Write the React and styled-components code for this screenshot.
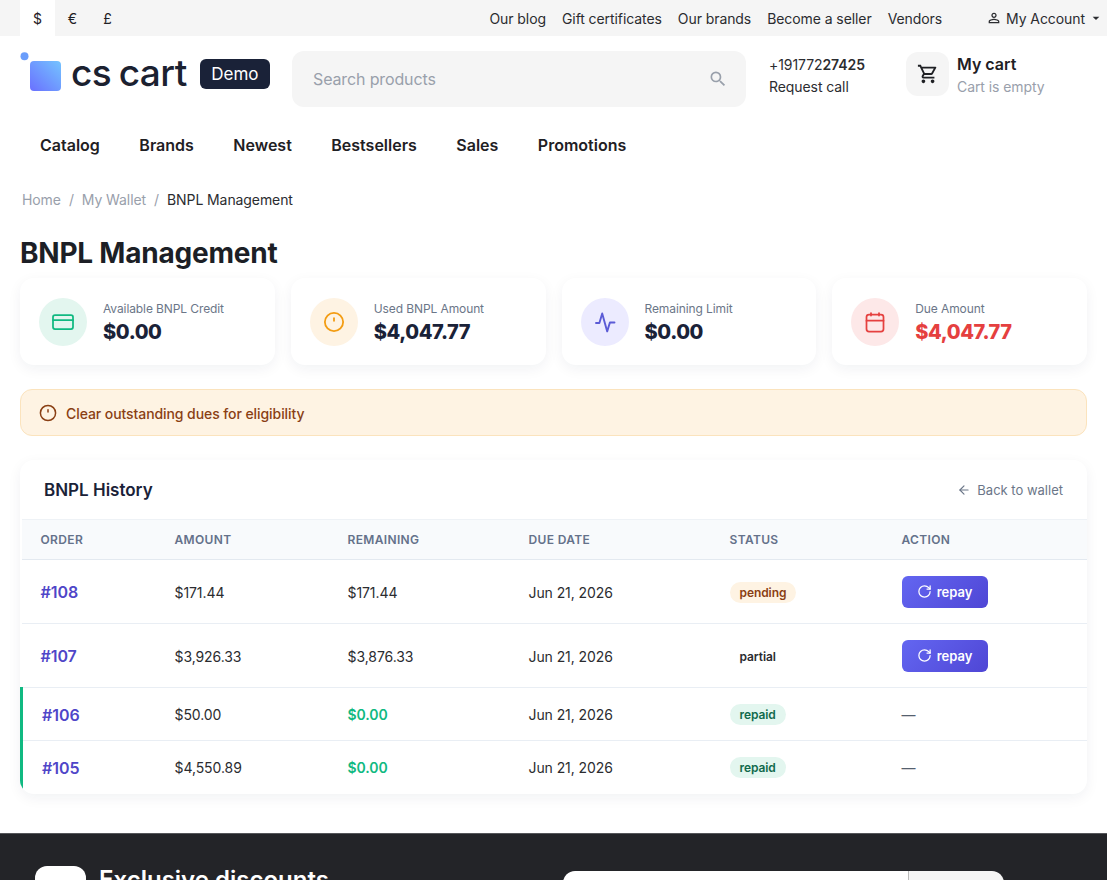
import React from "react";
import styled, { createGlobalStyle } from "styled-components";
import { CreditCard, ArrowLeft, RotateCw } from "lucide-react";
import {
  MdOutlinePersonOutline,
  MdOutlineShoppingCart,
  MdSearch,
  MdArrowDropDown,
} from "react-icons/md";

const GlobalStyle = createGlobalStyle`
  html, body {
    margin: 0;
    height: 880px;
    overflow: hidden;
    background: #fff;
  }
  body {
    font-family: Inter, "Liberation Sans", sans-serif;
    color: #1f2024;
  }
  * { box-sizing: border-box; }
`;

const Page = styled.div`
  width: 1107px;
`;

const TopBar = styled.div`
  height: 36px;
  background: #f5f5f5;
  display: flex;
  align-items: center;
  justify-content: space-between;
  padding: 0 4px 0 20px;
  font-size: 14px;
  letter-spacing: -0.08px;
`;

const Currencies = styled.div`
  display: flex;
  height: 100%;
`;

const Currency = styled.span`
  width: 35px;
  display: flex;
  align-items: center;
  justify-content: center;
  background: ${(props) => (props.$active ? "#fff" : "transparent")};
`;

const TopLinks = styled.div`
  display: flex;
  align-items: center;
  gap: 16px;
`;

const TopLink = styled.span`
  color: #2b2c30;
  white-space: nowrap;
`;

const Account = styled.span`
  display: flex;
  align-items: center;
  margin-left: 28px;
  color: #2b2c30;
  svg:first-child {
    font-size: 16px;
    margin-right: 4px;
  }
  svg:last-child {
    font-size: 16px;
    margin-left: 3px;
    margin-right: -1px;
  }
`;

const Header = styled.header`
  height: 71px;
  display: flex;
  align-items: center;
  padding: 15px 0 0 20px;
`;

const Logo = styled.div`
  display: flex;
  align-items: center;
  width: 272px;
  margin-bottom: 15px;
  flex: none;
`;

const LogoText = styled.span`
  font-size: 37px;
  font-weight: 500;
  line-height: 44px;
  letter-spacing: -0.5px;
  word-spacing: -2px;
  color: #1b2130;
  margin: 2px 0 0 10px;
  white-space: nowrap;
`;

const DemoBadge = styled.span`
  margin: 4px 0 0 13px;
  width: 70px;
  height: 30px;
  border-radius: 6px;
  background: #1a2238;
  color: #fff;
  font-size: 17px;
  display: flex;
  align-items: center;
  justify-content: center;
  flex: none;
`;

const SearchBox = styled.div`
  width: 454px;
  height: 56px;
  border-radius: 12px;
  background: #f5f5f5;
  display: flex;
  align-items: center;
  justify-content: space-between;
  padding: 0 18px 0 21px;
  font-size: 16px;
  letter-spacing: -0.13px;
  color: #99a0ab;
  flex: none;
  svg {
    font-size: 20px;
    color: #99a0ab;
  }
`;

const Phone = styled.div`
  margin: 0 0 6px 23px;
  width: 137px;
  font-size: 14px;
  line-height: 22px;
  letter-spacing: -0.08px;
  color: #2b2c30;
  b {
    font-weight: 600;
  }
`;

const Cart = styled.div`
  display: flex;
  align-items: center;
  gap: 8px;
  margin-bottom: 10px;
`;

const CartIcon = styled.div`
  width: 43px;
  height: 44px;
  border-radius: 12px;
  background: #f5f5f5;
  display: flex;
  align-items: center;
  justify-content: center;
  font-size: 22px;
`;

const CartText = styled.div`
  margin-top: 3px;
`;

const CartTitle = styled.div`
  font-size: 16px;
  font-weight: 600;
  line-height: 22px;
`;

const CartNote = styled.div`
  font-size: 14px;
  line-height: 24px;
  letter-spacing: -0.08px;
  color: #99a0ab;
`;

const Nav = styled.nav`
  display: flex;
  gap: 39.5px;
  padding: 27px 0 0 40px;
  font-size: 16px;
  font-weight: 600;
  line-height: 22px;
`;

const Crumbs = styled.div`
  display: flex;
  gap: 8px;
  padding: 33px 0 0 22px;
  font-size: 14px;
  line-height: 22px;
  letter-spacing: -0.09px;
  color: #99a0ab;
`;

const CrumbCurrent = styled.span`
  color: #2b2c30;
`;

const Main = styled.main`
  padding: 0 20px;
`;

const Title = styled.h1`
  margin: 24px 0 7px;
  font-size: 28px;
  line-height: 36px;
  font-weight: 700;
  letter-spacing: -0.22px;
  color: #1c1f26;
`;

const Stats = styled.div`
  display: grid;
  grid-template-columns: repeat(4, 1fr);
  gap: 16px;
`;

const StatCard = styled.div`
  height: 87px;
  border-radius: 14px;
  background: #fff;
  box-shadow: 0 4px 14px rgba(20, 30, 60, 0.06);
  display: flex;
  align-items: center;
  gap: 16px;
  padding: 0 19px;
`;

const StatIcon = styled.div`
  width: 48px;
  height: 48px;
  border-radius: 50%;
  background: ${(props) => props.$bg};
  color: ${(props) => props.$color};
  display: flex;
  align-items: center;
  justify-content: center;
  flex: none;
`;

const StatText = styled.div`
  margin-top: 3px;
`;

const StatLabel = styled.div`
  font-size: 12px;
  line-height: 18px;
  letter-spacing: -0.1px;
  color: #6b7688;
`;

const StatValue = styled.div`
  font-size: 20px;
  line-height: 28px;
  font-weight: 800;
  letter-spacing: -0.4px;
  color: ${(props) => props.$color || "#1a2238"};
`;

const Alert = styled.div`
  margin-top: 24px;
  height: 47px;
  border-radius: 12px;
  border: 1px solid #fbe3bd;
  background: #fef3e3;
  color: #8a3f14;
  display: flex;
  align-items: center;
  gap: 8px;
  padding: 1px 17px 0;
  font-size: 14px;
  font-weight: 500;
  letter-spacing: -0.08px;
`;

const HistoryCard = styled.section`
  margin-top: 24px;
  border-radius: 14px;
  background: #fff;
  box-shadow: 0 4px 14px rgba(20, 30, 60, 0.06);
  overflow: hidden;
`;

const HistoryHead = styled.div`
  height: 59px;
  display: flex;
  align-items: center;
  justify-content: space-between;
  padding: 1px 24px 0;
`;

const HistoryTitle = styled.h2`
  margin: 0;
  font-size: 17px;
  font-weight: 600;
  color: #1a2238;
`;

const BackLink = styled.span`
  display: flex;
  align-items: center;
  gap: 6px;
  font-size: 13px;
  color: #6b7688;
`;

const Table = styled.table`
  width: 100%;
  table-layout: fixed;
  border-collapse: collapse;
  font-size: 14px;
  letter-spacing: -0.08px;
`;

const HeadRow = styled.tr`
  background: #f8fafc;
  height: 40px;
  border-top: 1px solid #eef2f6;
  border-bottom: 1px solid #e3e9f0;
`;

const Th = styled.th`
  width: ${(props) => props.$width}px;
  padding: 0 19px;
  text-align: left;
  font-size: 12px;
  font-weight: 600;
  letter-spacing: 0.35px;
  color: #64718a;
`;

const Row = styled.tr`
  height: ${(props) => (props.$repaid ? 53 : 64)}px;
  border-bottom: 1px solid #e9eef4;
  &:last-child {
    border-bottom: none;
  }
  td:first-child {
    border-left: ${(props) => (props.$repaid ? "3px solid #10b981" : "none")};
  }
`;

const Td = styled.td`
  padding: 1px 19px 0;
  color: ${(props) => props.$color || "#2b2c30"};
  font-weight: ${(props) => (props.$color ? 600 : 400)};
`;

const OrderLink = styled.span`
  font-size: 16px;
  font-weight: 600;
  color: #4f46c8;
`;

const StatusPill = styled.span`
  display: inline-block;
  padding: 0 10px;
  height: 21px;
  line-height: 21px;
  border-radius: 11px;
  font-size: 12px;
  font-weight: 600;
  background: ${(props) => props.$bg};
  color: ${(props) => props.$color};
`;

const Dash = styled.span`
  color: #55606e;
`;

const RepayButton = styled.button`
  width: 86px;
  height: 32px;
  margin-top: -1px;
  border: none;
  border-radius: 6px;
  background: linear-gradient(135deg, #6366f1, #4f46d5);
  color: #fff;
  font-family: inherit;
  font-size: 13px;
  font-weight: 600;
  display: flex;
  align-items: center;
  justify-content: center;
  gap: 5px;
  padding: 0;
`;

const Footer = styled.footer`
  margin-top: 39px;
  height: 60px;
  background: #232428;
  border-top: 1px solid #55565a;
  display: flex;
  padding: 32px 0 0 35px;
`;

const FooterBadge = styled.div`
  width: 51px;
  height: 40px;
  background: #fff;
  border-radius: 12px;
  flex: none;
`;

const FooterTitle = styled.div`
  margin: 3px 0 0 13px;
  width: 464px;
  font-size: 24px;
  line-height: 22px;
  font-weight: 600;
  color: #fff;
`;

const Subscribe = styled.div`
  display: flex;
  width: 441px;
  height: 40px;
  margin-top: 5px;
  border-radius: 12px;
  overflow: hidden;
  flex: none;
`;

const SubscribeInput = styled.div`
  flex: 1;
  background: #fff;
`;

const SubscribeButton = styled.div`
  width: 96px;
  background: #f5f5f5;
  border-left: 1px solid #bbb;
`;

const LogoMark = () => (
  <svg width="41" height="39" viewBox="0 0 41 39">
    <defs>
      <linearGradient id="logo-fill" x1="0" y1="1" x2="1" y2="0">
        <stop offset="0" stopColor="#6a70ff" />
        <stop offset="1" stopColor="#74c4ff" />
      </linearGradient>
    </defs>
    <circle cx="4.5" cy="4.2" r="4" fill="#6a9dfb" />
    <rect x="10" y="9" width="31" height="30" rx="4" fill="url(#logo-fill)" />
  </svg>
);

const InfoIcon = ({ size = 20 }) => (
  <svg
    width={size}
    height={size}
    viewBox="0 0 20 20"
    fill="none"
    stroke="currentColor"
    strokeWidth="1.5"
    strokeLinecap="round"
  >
    <circle cx="10" cy="10" r="7.6" />
    <path d="M10 6.8v2.2" />
  </svg>
);

const PulseIcon = ({ size = 24 }) => (
  <svg
    width={size}
    height={size}
    viewBox="0 0 24 24"
    fill="none"
    stroke="currentColor"
    strokeWidth="1.9"
    strokeLinecap="round"
    strokeLinejoin="round"
  >
    <path d="M3 13h3.4L9.2 3.4l5 18 2.7-8.9H21.5" />
  </svg>
);

const CalendarIcon = ({ size = 24 }) => (
  <svg
    width={size}
    height={size}
    viewBox="0 0 24 24"
    fill="none"
    stroke="currentColor"
    strokeWidth="1.75"
    strokeLinecap="round"
  >
    <rect x="3.5" y="4.5" width="17" height="17" rx="2.5" />
    <path d="M3.5 10.7h17M8 3v2.5M16 3v2.5" />
  </svg>
);

const stats = [
  { label: "Available BNPL Credit", value: "$0.00", bg: "#e3f6ef", color: "#10b981", Icon: CreditCard },
  { label: "Used BNPL Amount", value: "$4,047.77", bg: "#fef3e3", color: "#f39c12", Icon: InfoIcon },
  { label: "Remaining Limit", value: "$0.00", bg: "#ecebff", color: "#5b5bd6", Icon: PulseIcon },
  { label: "Due Amount", value: "$4,047.77", bg: "#fde8e8", color: "#e5403f", Icon: CalendarIcon, danger: true },
];

const statusStyles = {
  pending: { bg: "#fef3e3", color: "#8a3f14" },
  partial: { bg: "transparent", color: "#2b2c30" },
  repaid: { bg: "#e3f6ef", color: "#116a4c" },
};

const orders = [
  { id: "#108", amount: "$171.44", remaining: "$171.44", status: "pending" },
  { id: "#107", amount: "$3,926.33", remaining: "$3,876.33", status: "partial" },
  { id: "#106", amount: "$50.00", remaining: "$0.00", status: "repaid" },
  { id: "#105", amount: "$4,550.89", remaining: "$0.00", status: "repaid" },
];

const columns = [
  ["ORDER", 134],
  ["AMOUNT", 173],
  ["REMAINING", 181],
  ["DUE DATE", 201],
  ["STATUS", 172],
  ["ACTION", 206],
];

const App = () => {
  return (
    <Page>
      <GlobalStyle />
      <TopBar>
        <Currencies>
          <Currency $active>$</Currency>
          <Currency>€</Currency>
          <Currency>£</Currency>
        </Currencies>
        <TopLinks>
          <TopLink>Our blog</TopLink>
          <TopLink>Gift certificates</TopLink>
          <TopLink>Our brands</TopLink>
          <TopLink>Become a seller</TopLink>
          <TopLink>Vendors</TopLink>
          <Account>
            <MdOutlinePersonOutline />
            My Account
            <MdArrowDropDown />
          </Account>
        </TopLinks>
      </TopBar>

      <Header>
        <Logo>
          <LogoMark />
          <LogoText>cs cart</LogoText>
          <DemoBadge>Demo</DemoBadge>
        </Logo>
        <SearchBox>
          Search products
          <MdSearch />
        </SearchBox>
        <Phone>
          <div>
            +191772<b>27425</b>
          </div>
          <div>Request call</div>
        </Phone>
        <Cart>
          <CartIcon>
            <MdOutlineShoppingCart />
          </CartIcon>
          <CartText>
            <CartTitle>My cart</CartTitle>
            <CartNote>Cart is empty</CartNote>
          </CartText>
        </Cart>
      </Header>

      <Nav>
        <span>Catalog</span>
        <span>Brands</span>
        <span>Newest</span>
        <span>Bestsellers</span>
        <span>Sales</span>
        <span>Promotions</span>
      </Nav>

      <Crumbs>
        <span>Home</span>
        <span>/</span>
        <span>My Wallet</span>
        <span>/</span>
        <CrumbCurrent>BNPL Management</CrumbCurrent>
      </Crumbs>

      <Main>
        <Title>BNPL Management</Title>
        <Stats>
          {stats.map(({ label, value, bg, color, Icon, danger }) => (
            <StatCard key={label}>
              <StatIcon $bg={bg} $color={color}>
                <Icon size={24} strokeWidth={1.75} />
              </StatIcon>
              <StatText>
                <StatLabel>{label}</StatLabel>
                <StatValue $color={danger ? "#e5403f" : undefined}>{value}</StatValue>
              </StatText>
            </StatCard>
          ))}
        </Stats>

        <Alert>
          <InfoIcon />
          Clear outstanding dues for eligibility
        </Alert>

        <HistoryCard>
          <HistoryHead>
            <HistoryTitle>BNPL History</HistoryTitle>
            <BackLink>
              <ArrowLeft size={14} />
              Back to wallet
            </BackLink>
          </HistoryHead>
          <Table>
            <thead>
              <HeadRow>
                {columns.map(([name, width]) => (
                  <Th key={name} $width={width}>
                    {name}
                  </Th>
                ))}
              </HeadRow>
            </thead>
            <tbody>
              {orders.map((order) => {
                const repaid = order.status === "repaid";
                return (
                  <Row key={order.id} $repaid={repaid}>
                    <Td>
                      <OrderLink>{order.id}</OrderLink>
                    </Td>
                    <Td>{order.amount}</Td>
                    <Td $color={repaid ? "#10b981" : undefined}>{order.remaining}</Td>
                    <Td>Jun 21, 2026</Td>
                    <Td>
                      <StatusPill
                        $bg={statusStyles[order.status].bg}
                        $color={statusStyles[order.status].color}
                      >
                        {order.status}
                      </StatusPill>
                    </Td>
                    <Td>
                      {repaid ? (
                        <Dash>—</Dash>
                      ) : (
                        <RepayButton>
                          <RotateCw size={15} />
                          repay
                        </RepayButton>
                      )}
                    </Td>
                  </Row>
                );
              })}
            </tbody>
          </Table>
        </HistoryCard>
      </Main>

      <Footer>
        <FooterBadge />
        <FooterTitle>Exclusive discounts</FooterTitle>
        <Subscribe>
          <SubscribeInput />
          <SubscribeButton />
        </Subscribe>
      </Footer>
    </Page>
  );
};

export default App;
